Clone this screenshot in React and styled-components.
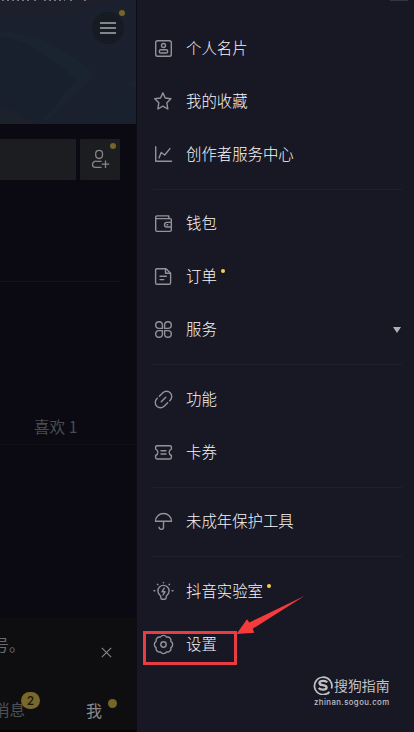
import React from 'react';
import styled, { createGlobalStyle } from 'styled-components';

const Global = createGlobalStyle`
  * { box-sizing: border-box; }
  body { margin: 0; background: #0b0a13; font-family: Inter, "Noto Sans CJK SC", sans-serif; }
`;

const Screen = styled.div`
  position: relative;
  display: flex;
  width: 414px;
  height: 732px;
  overflow: hidden;
`;

/* Dimmed profile page */
const Profile = styled.div`
  display: flex;
  flex-direction: column;
  width: 137px;
  flex: none;
  background: #0b0a13;
  border-right: 1px solid #0d0d13;
  border-bottom: 2px solid #040406;
`;

const Cover = styled.div`
  position: relative;
  display: flex;
  justify-content: flex-end;
  height: 124px;
  padding: 12px 12px 0 0;
  background: #1a202d;
`;

const CoverArt = styled.svg`
  position: absolute;
  inset: 0;
`;

const MenuButton = styled.div`
  position: relative;
  display: grid;
  place-items: center;
  width: 32px;
  height: 32px;
  border-radius: 50%;
  background: #151a23;
`;

const Dot = styled.i`
  position: absolute;
  top: ${(p) => p.$top}px;
  right: ${(p) => p.$right}px;
  width: 6px;
  height: 6px;
  border-radius: 50%;
  background: #756627;
`;

const Actions = styled.div`
  display: flex;
  gap: 4px;
  height: 143px;
  margin-right: 16px;
  margin-top: 15px;
  border-bottom: 1px solid #14141a;
`;

const EditButton = styled.div`
  width: 76px;
  height: 41px;
  border-radius: 0 1px 1px 0;
  background: #1c1d21;
`;

const AddFriend = styled.div`
  position: relative;
  width: 40px;
  height: 41px;
  border-radius: 1px;
  background: #1c1d21;
`;

const Tabs = styled.div`
  display: flex;
  align-items: flex-end;
  height: 163px;
  padding: 0 0 7px 34px;
  color: #4a4a50;
  font-family: "Noto Sans CJK SC", sans-serif;
  font-size: 15.6px;
  line-height: 22px;
  border-bottom: 1px solid #0f0f14;
`;

const Feed = styled.div`
  flex: 1;
`;

const Bottom = styled.div`
  height: 113px;
  padding-top: 15px;
  background: #0e0e10;
`;

const Notice = styled.div`
  display: flex;
  align-items: center;
  justify-content: space-between;
  height: 24px;
  padding-right: 24px;
  color: #68696b;
  font-size: 16px;
`;

const NoticeText = styled.span`
  margin-left: -7px;
`;

const CloseIcon = styled.svg`
  margin-top: 16px;
`;

const TabBar = styled.div`
  display: flex;
  justify-content: space-between;
  margin-top: 43px;
  padding-right: 34px;
  line-height: 24px;
`;

const TabLabel = styled.span`
  position: relative;
  margin-left: ${(p) => (p.$active ? 0 : -6)}px;
  color: ${(p) => (p.$active ? '#89898b' : '#505053')};
  font-size: ${(p) => (p.$active ? 16 : 15.6)}px;
`;

const Badge = styled.b`
  position: absolute;
  left: 27px;
  top: -7px;
  width: 19px;
  height: 17px;
  border-radius: 9px;
  background: #78682a;
  color: #15140e;
  font: 500 12px/17px Inter, sans-serif;
  text-align: center;
`;

const ActiveDot = styled.i`
  position: absolute;
  left: 22px;
  top: 0;
  width: 9px;
  height: 9px;
  border-radius: 50%;
  background: #756527;
`;

/* Side drawer */
const Drawer = styled.nav`
  flex: 1;
  padding: 22px 12px 0 16px;
  background: #181824;
`;

const Group = styled.div`
  & + & {
    margin-top: 7.7px;
    padding-top: 7.8px;
    border-top: 1px solid #20202b;
  }
`;

const Row = styled.div`
  display: flex;
  align-items: center;
  height: 53px;
  color: #f6f6f8;
`;

const Icon = styled.svg`
  flex: none;
  width: 21px;
  height: 21px;
  margin-right: 12px;
  fill: none;
  stroke: #92929b;
  stroke-width: 1.4;
  stroke-linecap: round;
  stroke-linejoin: round;
`;

const Label = styled.span`
  position: relative;
  padding-top: 1px;
  font-size: 15.4px;
  font-weight: 300;
  line-height: 22px;
  white-space: nowrap;
`;

const NewDot = styled.i`
  position: absolute;
  right: -8px;
  top: 4px;
  width: 4px;
  height: 4px;
  border-radius: 50%;
  background: #f3cf50;
`;

const Caret = styled.span`
  margin: 0 1px 0 auto;
  border: 4.5px solid transparent;
  border-top: 6px solid #b0b0b4;
  border-bottom: 0;
`;

/* Overlays */
const Callout = styled.svg`
  position: absolute;
  left: 0;
  top: 0;
  pointer-events: none;
`;

const Watermark = styled.div`
  position: absolute;
  left: 313px;
  top: 675px;
  color: #c1c1c6;
`;

const Brand = styled.div`
  display: flex;
  align-items: center;
  gap: 1px;
  height: 20px;
  font-size: 13.9px;
  white-space: nowrap;
`;

const Site = styled.div`
  margin-top: 2px;
  padding-left: 1px;
  font: 500 7.8px/11px Inter, sans-serif;
  letter-spacing: 0.42px;
`;

const icons = {
  card: (
    <>
      <rect x="2.7" y="2.7" width="15.6" height="15.6" rx="1.8" />
      <circle cx="10.5" cy="7.5" r="2" />
      <rect x="6.3" y="11.8" width="8.4" height="3.2" rx="1.6" />
    </>
  ),
  star: <path d="M9.9 1.9 12.2 7l5.7.8-4 4 .9 6.2-4.9-2.8L4.9 18l.9-6.2-4.1-4L7.5 7Z" />,
  chart: <path d="M2.7 2.8V17.3H18.6M6 13.9 8.2 8.5 11.7 11 16.9 4.6" />,
  wallet: (
    <>
      <path d="M18.3 8.7V6.6a1 1 0 0 0-1-1H2.7V17.1a1.3 1.3 0 0 0 1.3 1.3H17a1.3 1.3 0 0 0 1.3-1.3V14.7" />
      <path d="M2.7 5.6V4.2A1.3 1.3 0 0 1 4 2.9H15.8V5.6" />
      <path d="M18.3 9.4H13.8a2.3 2.3 0 0 0 0 4.6H18.3ZM14 11.7h.7" />
    </>
  ),
  order: (
    <>
      <path d="M4 2.7H13L17.6 7.2V16.9a1.4 1.4 0 0 1-1.4 1.4H4a1.4 1.4 0 0 1-1.4-1.4V4.1A1.4 1.4 0 0 1 4 2.7Z" />
      <path d="M12.5 3V7.3H17.3M7 10.3H13.4M7 13.6H10.8" />
    </>
  ),
  service: (
    <>
      <path d="M9.4 9.4H6A3.35 3.35 0 1 1 9.4 6Z" />
      <path d="M11.6 9.4H15A3.35 3.35 0 1 0 11.6 6Z" />
      <path d="M9.4 11.6H6A3.35 3.35 0 1 0 9.4 15Z" />
      <path d="M11.6 11.6H15A3.35 3.35 0 1 1 11.6 15Z" />
    </>
  ),
  link: (
    <g transform="rotate(-45 10.5 10.5)">
      <path d="M7 5.3H6.2a5.2 5.2 0 0 0 0 10.4H11.2" />
      <path d="M9.8 5.3H14.8a5.2 5.2 0 0 1 0 10.4H14" />
      <path d="M7.3 10.5H13.7" />
    </g>
  ),
  ticket: (
    <>
      <path d="M4 3.7H17a1.4 1.4 0 0 1 1.4 1.4V7.1a3.4 3.4 0 0 0 0 6.4V15.6A1.4 1.4 0 0 1 17 17H4a1.4 1.4 0 0 1-1.4-1.4V13.5a3.4 3.4 0 0 0 0-6.4V5.1A1.4 1.4 0 0 1 4 3.7Z" />
      <path d="M8 8.8H13M8 12H13" />
    </>
  ),
  umbrella: (
    <path d="M2.5 10.2a8 7.7 0 0 1 16 0ZM10.5 10.5V16a2.2 2.2 0 0 1-4.4.3" />
  ),
  bulb: (
    <>
      <path d="M7.8 15.2C6 13.8 4.9 12.4 4.9 10a5.6 5.6 0 0 1 11.2 0c0 2.4-1.1 3.8-2.9 5.2V16.7a1.5 1.5 0 0 1-1.5 1.5H9.3a1.5 1.5 0 0 1-1.5-1.5Z" />
      <path d="M11.2 7.2 9 10.8H12L10 14" />
      <path d="M10.5 1.4v.3M4.5 3.3l.4.5M16.5 3.3l-.4.5M1 9.7h.9M19.1 9.7h.9" />
    </>
  ),
  gear: (
    <>
      <path d="M7.4 3.1a3.6 3.6 0 0 1 6.2 0a3.6 3.6 0 0 1 4.3 4.3a3.6 3.6 0 0 1 0 6.2a3.6 3.6 0 0 1-4.3 4.3a3.6 3.6 0 0 1-6.2 0a3.6 3.6 0 0 1-4.3-4.3a3.6 3.6 0 0 1 0-6.2a3.6 3.6 0 0 1 4.3-4.3Z" />
      <circle cx="10.5" cy="10.5" r="2.7" />
    </>
  ),
};

const groups = [
  [['card', '个人名片'], ['star', '我的收藏'], ['chart', '创作者服务中心']],
  [['wallet', '钱包'], ['order', '订单', 'dot'], ['service', '服务', 'caret']],
  [['link', '功能'], ['ticket', '卡券']],
  [['umbrella', '未成年保护工具']],
  [['bulb', '抖音实验室', 'dot'], ['gear', '设置']],
];

export default function App() {
  return (
    <Screen>
      <Global />
      <Profile>
        <Cover>
          <CoverArt width="136" height="124" fill="none">
            <path d="M0 0H115Q75 22 0 14Z" fill="#1d1f2a" />
            <path d="M0 31Q48 33 96 75L42 124H79L136 77V124H0Z" fill="#1a2430" />
            <path d="M79 124 124 82 136 88V124Z" fill="#1a212e" />
            <path d="M0 37Q35 40 76 80L40 124H0Z" fill="#19202d" />
            <path d="M0 106Q20 112 34 124H0Z" fill="#1c212c" />
            <path d="M2 .5H30M34 .5H38M44 .5H65M70 .5H73M84 .5H87" stroke="#747980" strokeDasharray="2 3" />
          </CoverArt>
          <MenuButton>
            <svg width="16" height="14" stroke="#818788" strokeWidth="2">
              <path d="M0 2H16M0 7H16M0 12H16" />
            </svg>
            <Dot $top={-2} $right={-1} />
          </MenuButton>
        </Cover>
        <Actions>
          <EditButton />
          <AddFriend>
            <svg width="40" height="41" fill="none" stroke="#85858a" strokeWidth="1.3">
              <rect x="15.7" y="11.3" width="6.8" height="8.2" rx="3.4" />
              <path d="M21.5 22.3H16.5a3.3 3.3 0 0 0-4 3.2c0 1.6 1.3 2.9 3 2.9H21.5M25.5 21.5V28.9M21.8 25.2H29.2" />
            </svg>
            <Dot $top={4} $right={4} />
          </AddFriend>
        </Actions>
        <Tabs>喜欢 1</Tabs>
        <Feed />
        <Bottom>
          <Notice>
            <NoticeText>号。</NoticeText>
            <CloseIcon width="11" height="11" stroke="#858587" strokeWidth="1.2">
              <path d="M.8.8 10.2 10.2M10.2.8.8 10.2" />
            </CloseIcon>
          </Notice>
          <TabBar>
            <TabLabel>消息<Badge>2</Badge></TabLabel>
            <TabLabel $active>我<ActiveDot /></TabLabel>
          </TabBar>
        </Bottom>
      </Profile>
      <Drawer>
        {groups.map((rows, i) => (
          <Group key={i}>
            {rows.map(([icon, label, extra]) => (
              <Row key={label}>
                <Icon viewBox="0 0 21 21">{icons[icon]}</Icon>
                <Label>
                  {label}
                  {extra === 'dot' && <NewDot />}
                </Label>
                {extra === 'caret' && <Caret />}
              </Row>
            ))}
          </Group>
        ))}
      </Drawer>
      <Callout width="414" height="732">
        <path d="M390 0H408" stroke="#50505a" />
        <rect x="144.5" y="632.5" width="91" height="31" fill="none" stroke="#e93c43" strokeWidth="3" />
        <path d="M236.5 634 247 619.3 249.3 622.5 304.8 595.7 252.7 628.7 254.3 632.8Z" fill="#f63b3c" />
      </Callout>
      <Watermark>
        <Brand>
          <svg width="20" height="20" fill="none" stroke="#c1c1c6">
            <path d="M16.5 16.9A8.7 8.7 0 1 1 18.5 13.5M13.8 18.5H16.2" strokeWidth="1.7" />
            <path d="M14.2 7.4Q13 5.8 10.3 5.8C5.4 5.8 5.2 9.5 9.8 10.2C15.2 11 14.5 14.6 10 14.6Q7 14.6 5.8 12.9" strokeWidth="2.3" />
          </svg>
          搜狗指南
        </Brand>
        <Site>zhinan.sogou.com</Site>
      </Watermark>
    </Screen>
  );
}
